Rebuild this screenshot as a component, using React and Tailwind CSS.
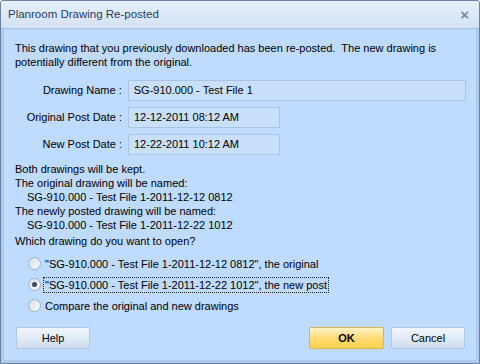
import React from "react";

const font = { fontFamily: "Tahoma, 'Liberation Sans', 'DejaVu Sans', sans-serif" };

function Radio({ checked, children, focused }) {
  return (
    <div className="flex items-center h-[21px]">
      <div className="w-[13px] h-[13px] rounded-full border border-[#9fb0c6] bg-gradient-to-br from-[#d9dfe8] to-[#f7f9fc] flex items-center justify-center">
        {checked && <div className="w-[5px] h-[5px] rounded-full bg-[#3e4a5c]" />}
      </div>
      <span
        className={
          "ml-[3px] px-[1px] leading-[14px] " +
          (focused ? "outline outline-1 outline-dotted outline-[#222]" : "")
        }
      >
        {children}
      </span>
    </div>
  );
}

function Field({ label, value, wide }) {
  return (
    <div className="flex items-center">
      <div className="w-[114px] text-right pr-[6px]">{label}</div>
      <div
        className={
          "h-[21px] border border-[#a9c4e6] bg-[#c9e0fd] flex items-center pl-[5px] " +
          (wide ? "w-[339px]" : "w-[152px]")
        }
      >
        {value}
      </div>
    </div>
  );
}

export default function App() {
  return (
    <div className="w-[480px] h-[364px] bg-white">
      <div
        className="w-[480px] h-[364px] border border-[#6a84a8] bg-[#bfdbff] flex flex-col text-[11px] text-[#000] rounded-t-[3px]"
        style={font}
      >
        <div className="h-[28px] bg-gradient-to-b from-[#e6effb] to-[#d3e2f5] border-b border-[#a7c1e2] flex items-center justify-between pl-[7px] pr-[10px] rounded-t-[3px]">
          <span className="text-[#1f3d66] text-[11.5px]">Planroom Drawing Re-posted</span>
          <span className="text-[#7a8898] text-[15px] font-bold leading-none">×</span>
        </div>
        <div className="flex-1 border-x-[3px] border-b-[3px] border-[#afc9ea] flex flex-col pl-[10px] pr-[10px]">
          <div className="mt-[12px] leading-[14px] pl-[1px]">
            <div>This drawing that you previously downloaded has been re-posted.&nbsp; The new drawing is</div>
            <div>potentially different from the original.</div>
          </div>
          <div className="mt-[11px] flex flex-col gap-[6px]">
            <Field label="Drawing Name :" value="SG-910.000 - Test File 1" wide />
            <Field label="Original Post Date :" value="12-12-2011 08:12 AM" />
            <Field label="New Post Date :" value="12-22-2011 10:12 AM" />
          </div>
          <div className="mt-[7px] leading-[14px] pl-[1px]">
            <div>Both drawings will be kept.</div>
            <div>The original drawing will be named:</div>
            <div className="pl-[12px]">SG-910.000 - Test File 1-2011-12-12 0812</div>
            <div>The newly posted drawing will be named:</div>
            <div className="pl-[12px]">SG-910.000 - Test File 1-2011-12-22 1012</div>
            <div className="mt-[2px]">Which drawing do you want to open?</div>
          </div>
          <div className="mt-[5px] pl-[14px] flex flex-col">
            <Radio>"SG-910.000 - Test File 1-2011-12-12 0812", the original</Radio>
            <Radio checked focused>"SG-910.000 - Test File 1-2011-12-22 1012", the new post</Radio>
            <Radio>Compare the original and new drawings</Radio>
          </div>
          <div className="mt-auto mb-[11px] flex items-center pl-[2px] pr-[1px]">
            <button className="w-[74px] h-[22px] border border-[#b3c7e1] rounded-[2px] bg-gradient-to-b from-[#f2f6fc] via-[#e2ebf7] to-[#cfdcee] text-[11px] text-black">
              Help
            </button>
            <div className="flex-1" />
            <button className="w-[75px] h-[22px] border border-[#d7b65a] rounded-[2px] bg-gradient-to-b from-[#fff3c7] via-[#fedc74] to-[#fbd04a] text-[11px] font-bold text-black">
              OK
            </button>
            <button className="ml-[7px] w-[74px] h-[22px] border border-[#b3c7e1] rounded-[2px] bg-gradient-to-b from-[#f2f6fc] via-[#e2ebf7] to-[#cfdcee] text-[11px] text-black">
              Cancel
            </button>
          </div>
        </div>
      </div>
    </div>
  );
}
